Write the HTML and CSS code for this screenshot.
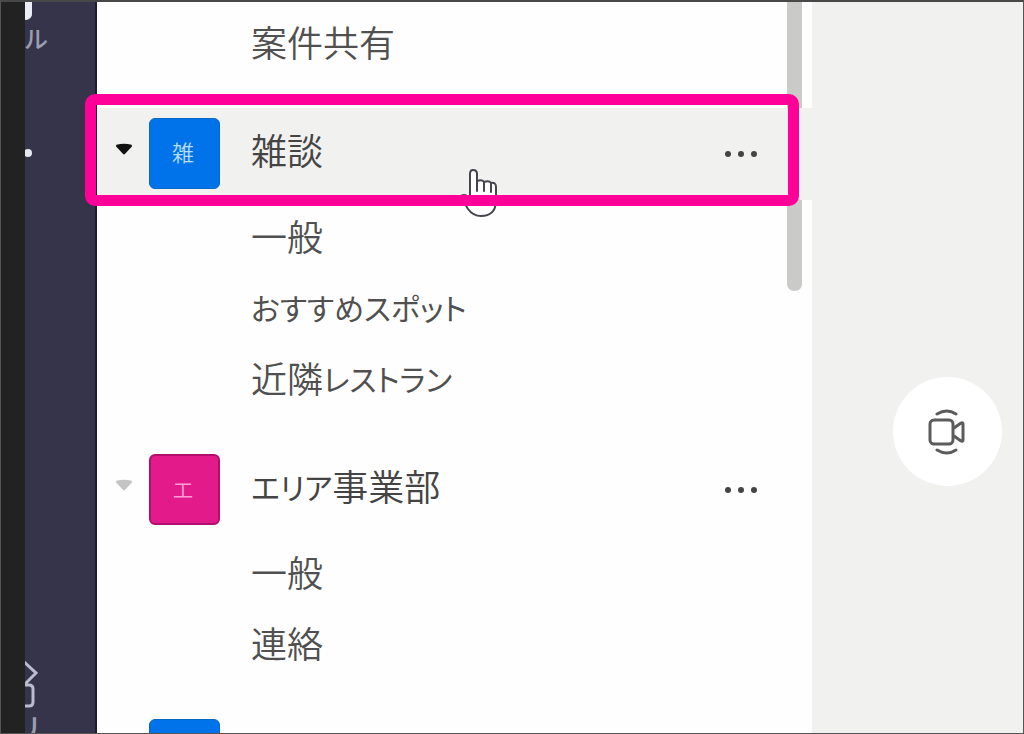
FILE: index.html
```html
<!DOCTYPE html>
<html lang="ja">
<head>
  <meta charset="UTF-8" />
  <meta name="viewport" content="width=device-width, initial-scale=1" />
  <title>チーム</title>
  <link rel="stylesheet" href="styles.css">
</head>
<body>

  <div class="window">

    <nav class="rail">
      <div class="rail-list">
        <a class="rail-item" href="#">
          <svg width="64" height="18" viewBox="0 0 64 18">
            <path d="M2 -6V11Q2 16 7 16H57Q62 16 62 11V-6" fill="none" stroke="#e6e6f0" stroke-width="4" />
            <path d="M55 -2H64V11Q64 17 56 18Z" fill="#ececf4" />
          </svg>
          <span>ファイル</span>
        </a>
        <a class="rail-item rail-more" href="#" aria-label="その他">
          <svg width="64" height="10" viewBox="0 0 64 10" fill="#e6e6f0">
            <circle cx="4" cy="5" r="4" />
            <circle cx="32" cy="5" r="4" />
            <circle cx="60" cy="5" r="4" />
          </svg>
        </a>
        <a class="rail-item rail-apps" href="#">
          <svg width="76" height="50" viewBox="0 0 76 50" fill="none" stroke="#bcbcd0" stroke-width="3">
            <path d="M60 1L74 14L62 26H67Q71 26 71 30V43Q71 47 67 47H8Q4 47 4 43V10" />
            <path d="M60 1L46 14L62 28" />
          </svg>
          <span>アプリ</span>
        </a>
      </div>
    </nav>

    <div class="teams">
      <div class="scrollbar"></div>

      <div class="team">
        <a class="channel" href="#">案件共有</a>
      </div>

      <div class="team">
        <div class="team-header active">
          <button class="toggle" type="button" aria-label="折りたたむ">
            <svg width="18" height="13" viewBox="0 0 16 12"><path d="M1 1.500Q8 0 15 1.500L15.500 3L9 10Q8 11 7 10L.5 3Z" fill="currentColor" /></svg>
          </button>
          <span class="avatar blue">雑</span>
          <a class="team-name" href="#">雑談</a>
          <button class="more" type="button" aria-label="その他のオプション">
            <svg width="34" height="8" viewBox="0 0 34 8" fill="currentColor"><circle cx="4" cy="4" r="3" /><circle cx="17" cy="4" r="3" /><circle cx="30" cy="4" r="3" /></svg>
          </button>
          <svg class="cursor" width="40" height="52" viewBox="0 0 40 52" fill="#fff" stroke="#45454d" stroke-width="2" stroke-linejoin="round" stroke-linecap="round">
            <path d="M10 31V6Q10 2 13 2Q17 2 17 6V13Q22 11 24 14Q29 12 31 15Q36 14 36 19V34Q35 48 21 48Q13 48 8 41L2 31Q-1 27 4 27Q7 27 10 31Z" />
            <path d="M17 13V23M24 14V23M31 15V24" fill="none" />
          </svg>
          <div class="highlight"></div>
        </div>
        <a class="channel" href="#">一般</a>
        <a class="channel" href="#"><span class="kana">おすすめスポット</span></a>
        <a class="channel" href="#">近隣<span class="kana">レストラン</span></a>
      </div>

      <div class="team">
        <div class="team-header">
          <button class="toggle" type="button" aria-label="折りたたむ">
            <svg width="18" height="13" viewBox="0 0 16 12"><path d="M1 1.500Q8 0 15 1.500L15.500 3L9 10Q8 11 7 10L.5 3Z" fill="currentColor" /></svg>
          </button>
          <span class="avatar pink">エ</span>
          <a class="team-name" href="#"><span class="kana">エリア</span>事業部</a>
          <button class="more" type="button" aria-label="その他のオプション">
            <svg width="34" height="8" viewBox="0 0 34 8" fill="currentColor"><circle cx="4" cy="4" r="3" /><circle cx="17" cy="4" r="3" /><circle cx="30" cy="4" r="3" /></svg>
          </button>
        </div>
        <a class="channel" href="#">一般</a>
        <a class="channel" href="#">連絡</a>
      </div>

      <div class="team">
        <div class="team-header">
          <span class="toggle"></span>
          <span class="avatar blue"></span>
        </div>
      </div>
    </div>

    <main class="content">
      <button class="meet" type="button" aria-label="今すぐ会議">
        <svg width="40" height="48" viewBox="0 0 40 48" fill="none" stroke="#5c5c5c" stroke-width="3" stroke-linejoin="round" stroke-linecap="round">
          <rect x="3" y="12" width="23" height="24" rx="4" />
          <path d="M27 20L34 15Q36 14 36 16V32Q36 34 34 33L27 28" />
          <path d="M10 6Q20 0 29 6M10 42Q20 48 29 42" />
        </svg>
      </button>
    </main>

  </div>

</body>
</html>
```
FILE: styles.css
```css
* {
  box-sizing: border-box;
}

body {
  margin: 0;
  font-family: "Noto Sans CJK JP", sans-serif;
  font-weight: 350;
  font-feature-settings: "palt";
  color: #505050;
}

a {
  color: inherit;
  text-decoration: none;
}

button {
  padding: 0;
  border: none;
  background: none;
  color: inherit;
  cursor: pointer;
}

svg {
  display: block;
}

.window {
  display: flex;
  height: 100vh;
  overflow: hidden;
  border: 1px solid #555;
  border-top: 2px solid #484848;
  background-color: #f1f1f0;
}

/* left app bar, partly scrolled out of view */
.rail {
  display: flex;
  flex: none;
  width: 96px;
  overflow: hidden;
  border-left: 24px solid #222;
  border-right: 2px solid #1d1c2b;
  background-color: #35344a;
}

.rail-list {
  display: flex;
  flex: none;
  flex-direction: column;
  width: 144px;
  margin-left: -97px;
  margin-bottom: -12px;
}

.rail-item {
  display: flex;
  flex-direction: column;
  align-items: center;
  font-size: 24px;
  font-weight: 500;
  font-feature-settings: normal;
  line-height: 36px;
  color: #9d9db0;
  white-space: nowrap;
}

.rail-more {
  margin-top: 92px;
}

.rail-apps {
  margin-top: auto;
  font-size: 28px;
}

/* team list */
.teams {
  position: relative;
  flex: 0 0 70%;
  padding-top: 4px;
  background-color: #fefefe;
}

.scrollbar {
  position: absolute;
  top: 0;
  right: 10px;
  width: 15px;
  height: 289px;
  border-radius: 0 0 7px 7px;
  background-color: #cacac8;
}

.team {
  margin-bottom: 31px;
}

.team-header {
  position: relative;
  display: flex;
  align-items: center;
  height: 92px;
  padding: 0 54px 2px 18px;
  color: #444;
}

.team-header.active {
  background-color: #f1f1f0;
}

.toggle {
  flex: none;
  width: 34px;
  padding-bottom: 8px;
  color: #c4c4c4;
}

.active .toggle {
  color: #111;
}

.avatar {
  flex: none;
  width: 71px;
  height: 71px;
  padding-right: 3px;
  border-radius: 6px;
  font-size: 22px;
  line-height: 64px;
  text-align: center;
}

.blue {
  background-color: #0073ea;
  border: 1px solid #0868c4;
  color: #b9dcff;
}

.pink {
  background-color: #e21a8a;
  border: 2px solid #b00f70;
  color: #ff9ed6;
}

.team-name {
  flex: 1;
  padding-left: 31px;
  padding-bottom: 8px;
  font-size: 36px;
  line-height: 52px;
}

.channel {
  display: block;
  padding-left: 154px;
  font-size: 36px;
  line-height: 71px;
}

/* kana is set a step smaller than kanji */
.kana {
  font-size: 30px;
  font-weight: 400;
  line-height: 1;
  vertical-align: 2px;
}

.more {
  padding-top: 2px;
}

.cursor {
  position: absolute;
  left: 363px;
  top: 60px;
  z-index: 1;
}

.highlight {
  position: absolute;
  top: -14px;
  bottom: -6px;
  left: -12px;
  right: 13px;
  z-index: 2;
  border: 11px solid #ff0099;
  border-radius: 10px;
}

/* right pane */
.content {
  display: flex;
  flex: 1;
  justify-content: flex-end;
  align-items: flex-start;
  padding: 375px 21px 0 0;
}

.meet {
  display: flex;
  justify-content: center;
  align-items: center;
  width: 109px;
  height: 109px;
  padding-right: 2px;
  border-radius: 50%;
  background-color: #fff;
}
```
